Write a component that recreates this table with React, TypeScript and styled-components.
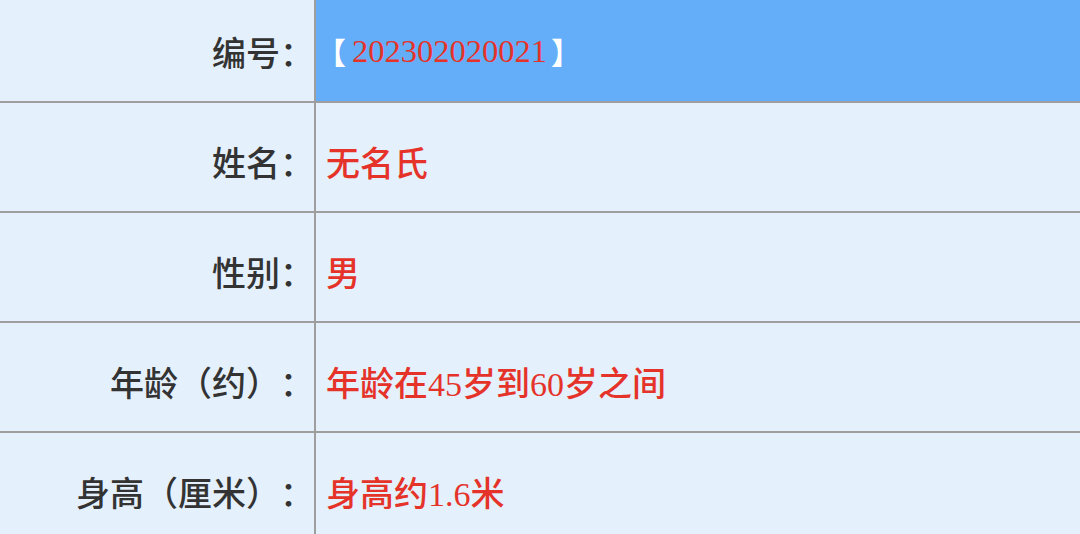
import React from 'react'
import styled, { createGlobalStyle } from 'styled-components'

const GlobalStyle = createGlobalStyle`
  html, body {
    margin: 0;
    padding: 0;
    background: #e4f0fc;
    overflow: hidden;
  }
  body {
    font-family: "Liberation Serif", "Noto Sans CJK SC", serif;
    text-spacing-trim: space-all;
  }
`

const Table = styled.div`
  width: 1080px;
  height: 534px;
  overflow: hidden;
  background: #e4f0fc;
`

const Inner = styled.div`
  margin-top: -7px;
  display: flex;
  flex-direction: column;
`

const Row = styled.div<{ $first?: boolean }>`
  display: grid;
  grid-template-columns: 316px 1fr;
  height: 108px;
  border-top: ${(p) => (p.$first ? 'none' : '2px solid #9e9e9e')};
`

const Label = styled.div`
  display: flex;
  align-items: center;
  justify-content: flex-end;
  padding-right: 0;
  padding-top: 8px;
  border-right: 2px solid #9e9e9e;
  color: #333333;
  font-size: 34px;
  font-weight: 500;
  white-space: nowrap;
  text-spacing-trim: space-all;
`

const Value = styled.div<{ $highlight?: boolean }>`
  display: flex;
  align-items: center;
  padding-left: 10px;
  padding-top: 8px;
  background: ${(p) => (p.$highlight ? '#64aef9' : 'transparent')};
  color: #e5332a;
  font-size: 34px;
  font-weight: 500;
  white-space: nowrap;
  text-spacing-trim: space-all;
`

const IdValue = styled(Value)`
  padding-left: 0;
`

const Bracket = styled.span`
  color: #ffffff;
  font-weight: 700;
  font-family: "Noto Sans CJK SC", sans-serif;
  font-size: 30px;
  text-spacing-trim: space-all;
`

const Number = styled.span`
  font-family: "Liberation Serif", serif;
  font-size: 32.5px;
  margin: 0 4px 0 6px;
`

const rows = [
  { label: '姓名：', value: '无名氏' },
  { label: '性别：', value: '男' },
  { label: '年龄（约）：', value: '年龄在45岁到60岁之间' },
  { label: '身高（厘米）：', value: '身高约1.6米' },
]

export default function App() {
  return (
    <>
      <GlobalStyle />
      <Table>
        <Inner>
          <Row $first>
            <Label>编号：</Label>
            <IdValue $highlight>
              <Bracket>【</Bracket>
              <Number>202302020021</Number>
              <Bracket>】</Bracket>
            </IdValue>
          </Row>
          {rows.map((r) => (
            <Row key={r.label}>
              <Label>{r.label}</Label>
              <Value>{r.value}</Value>
            </Row>
          ))}
        </Inner>
      </Table>
    </>
  )
}
